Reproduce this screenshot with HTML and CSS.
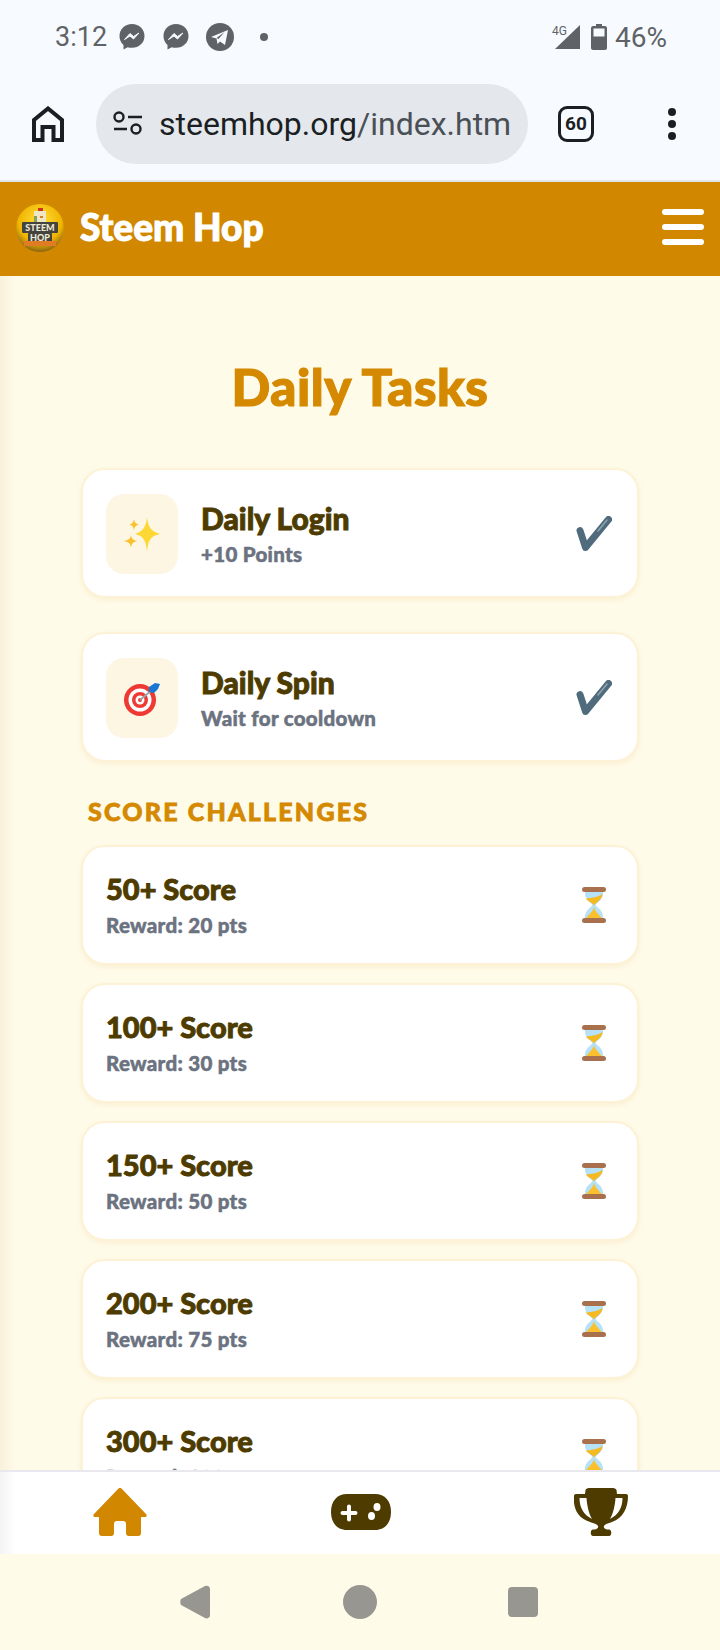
FILE: index.html
```html
<!DOCTYPE html>
<html lang="en">
<head>
    <meta charset="UTF-8">
    <meta name="viewport" content="width=device-width, initial-scale=1.0">
    <title>Steem Hop - Daily Tasks</title>
    <link rel="stylesheet" href="styles.css">
</head>
<body>
    <svg class="defs" width="0" height="0">
        <symbol id="hourglass" viewBox="0 0 24 36">
            <path d="M3 4C2 13 9 15 10.500 18 9 21 2 23 3 32H21C22 23 15 21 13.500 18 15 15 22 13 21 4z" fill="#b5e2f8"/>
            <path d="M4 11.500C10 11 16 10 20.500 7 20.500 13 14 15 12 18.500 10 15 5 14.500 4 11.500z" fill="#f5b921"/>
            <path d="M12 20C13 25 18 28 20 31.500H4C6 28 11 25 12 20z" fill="#fbc02d"/>
            <rect x="0" y="0" width="24" height="5" rx="2.500" fill="#a9704e"/>
            <rect x="0" y="31" width="24" height="5" rx="2.500" fill="#a9704e"/>
        </symbol>
        <symbol id="check" viewBox="0 0 36 36">
            <path d="M4 14.500L9.500 31.500 32.500 3.500" fill="none" stroke="#4f6b7c" stroke-width="7" stroke-linecap="round" stroke-linejoin="round"/>
            <path d="M22 15l9-11" stroke="#8fa4b1" stroke-width="1.500" stroke-linecap="round"/>
        </symbol>
        <symbol id="messenger" viewBox="0 0 26 26">
            <path d="M13 0C5.800 0 .5 5.200.5 12c0 3.700 1.500 6.800 4 9v4.500l4.200-2.300c1.300.4 2.800.6 4.300.6 7.200 0 12.500-5.200 12.500-11.800S20.200 0 13 0z" fill="#5f6368"/>
            <path d="M5.500 15.500l5.500-6 3.500 3 5.500-3.500-5.500 6-3.500-3z" fill="#f7faff" stroke="#f7faff" stroke-width="1" stroke-linejoin="round"/>
        </symbol>
    </svg>

    <div class="phone">
        <!-- Android status bar -->
        <div class="status-bar">
            <span class="status-time">3:12</span>
            <svg class="status-icon" width="26" height="26"><use href="#messenger"/></svg>
            <svg class="status-icon second" width="26" height="26"><use href="#messenger"/></svg>
            <svg class="status-icon third" width="28" height="28" viewBox="0 0 28 28">
                <circle cx="14" cy="14" r="14" fill="#5f6368"/>
                <path d="M5 14L22 7l-3 15-5-3.500-2.500 2.500-1-5.500zM10.500 15l8-6-6 7z" fill="#f7faff" fill-rule="evenodd"/>
            </svg>
            <span class="status-dot"></span>
            <span class="status-right">
                <svg width="30" height="26" viewBox="0 0 30 26" class="signal">
                    <path d="M28 1v24H3z" fill="#5f6368"/>
                    <text x="0" y="11" class="signal-text">4G</text>
                </svg>
                <svg width="16" height="26" viewBox="0 0 16 26" class="battery">
                    <path d="M5 0h6v2h3c1 0 2 1 2 2v20c0 1-1 2-2 2H2c-1 0-2-1-2-2V4c0-1 1-2 2-2h3z" fill="#5f6368"/>
                    <rect x="2.500" y="4.500" width="11" height="8" fill="#f7faff"/>
                </svg>
                <span class="status-pct">46%</span>
            </span>
        </div>

        <!-- Browser toolbar -->
        <div class="toolbar">
            <svg class="tool-home" width="32" height="36" viewBox="0 0 32 36">
                <path d="M2 34V14L16 2.500 30 14v20h-8.500V21h-11v13z" fill="none" stroke="#1b1f23" stroke-width="4"/>
            </svg>
            <div class="url-pill">
                <svg width="30" height="26" viewBox="0 0 30 26">
                    <circle cx="6" cy="6" r="4.500" fill="none" stroke="#1b1f23" stroke-width="2.400"/>
                    <path d="M15 6h14M1 18h13" stroke="#1b1f23" stroke-width="2.400"/>
                    <circle cx="23" cy="18" r="4.500" fill="none" stroke="#1b1f23" stroke-width="2.400"/>
                </svg>
                <span class="url-text"><b>steemhop.org</b>/index.htm</span>
            </div>
            <div class="tab-count">60</div>
            <div class="tool-menu"><i></i><i></i><i></i></div>
        </div>

        <!-- App header -->
        <header class="app-header">
            <div class="brand">
                <svg class="brand-logo" width="48" height="48" viewBox="0 0 48 48">
                    <defs>
                        <radialGradient id="coin" cx="50%" cy="35%" r="65%">
                            <stop offset="0" stop-color="#ffe23a"/>
                            <stop offset=".7" stop-color="#f0b400"/>
                            <stop offset="1" stop-color="#8a6414"/>
                        </radialGradient>
                    </defs>
                    <circle cx="24" cy="24" r="24" fill="url(#coin)"/>
                    <rect x="18" y="7" width="12" height="12" fill="#efe6c4"/>
                    <rect x="18" y="12" width="3" height="7" fill="#8aa05a"/>
                    <rect x="22" y="4" width="5" height="3" fill="#c8321e"/>
                    <rect x="24" y="12" width="3" height="2" fill="#e07c24"/>
                    <rect x="6" y="18" width="36" height="11" rx="1" fill="#44443f"/>
                    <rect x="12" y="29" width="24" height="9" rx="1" fill="#44443f"/>
                    <rect x="8" y="37" width="32" height="5" fill="#e07c24"/>
                    <text x="24" y="27" class="logo-text">STEEM</text>
                    <text x="24" y="36.500" class="logo-text">HOP</text>
                </svg>
                <span class="brand-name">Steem Hop</span>
            </div>
            <div class="burger"><i></i><i></i><i></i></div>
        </header>

        <main class="content">
            <h1 class="page-title">Daily Tasks</h1>

            <div class="task-card daily">
                <div class="task-icon">
                    <svg width="36" height="36" viewBox="0 0 36 36">
                        <path d="M23 1c1 9 3 14 13 17-10 2-12 7-13 18-1-11-3-16-12-18 9-3 11-8 12-17z" fill="#fdd835"/>
                        <path d="M10 3c.5 3 1.500 5 5 5.500-3.500 1-4.500 2.500-5 6-.5-3.500-1.500-5-4.500-6 3-.5 4-2.500 4.500-5.500z" fill="#fbc02d"/>
                        <path d="M7 19c.5 3.500 2 5 6 6-4 1-5.500 2.500-6 7-.5-4.500-2-6-7-7 5-1 6.500-2.500 7-6z" fill="#fbc02d"/>
                    </svg>
                </div>
                <div class="task-info">
                    <div class="task-name">Daily Login</div>
                    <div class="task-sub">+10 Points</div>
                </div>
                <svg class="task-state" width="36" height="36"><use href="#check"/></svg>
            </div>

            <div class="task-card daily">
                <div class="task-icon">
                    <svg width="36" height="36" viewBox="0 0 36 36">
                        <circle cx="16" cy="20" r="16" fill="#ef3a33"/>
                        <circle cx="16" cy="20" r="11.500" fill="#fff"/>
                        <circle cx="16" cy="20" r="8" fill="#ef3a33"/>
                        <circle cx="16" cy="20" r="4.500" fill="#fff"/>
                        <circle cx="16" cy="20" r="2" fill="#ef3a33"/>
                        <path d="M16 20L28 10" stroke="#9aa6ad" stroke-width="1.800"/>
                        <path d="M25 7l6-4 5 1-2 5-4 4-5-1z" fill="#1976d2"/>
                    </svg>
                </div>
                <div class="task-info">
                    <div class="task-name">Daily Spin</div>
                    <div class="task-sub">Wait for cooldown</div>
                </div>
                <svg class="task-state" width="36" height="36"><use href="#check"/></svg>
            </div>

            <h2 class="section-label">SCORE CHALLENGES</h2>

            <div class="task-card challenge">
                <div class="task-info">
                    <div class="task-name">50+ Score</div>
                    <div class="task-sub">Reward: 20 pts</div>
                </div>
                <svg class="task-state glass" width="24" height="36"><use href="#hourglass"/></svg>
            </div>
            <div class="task-card challenge">
                <div class="task-info">
                    <div class="task-name">100+ Score</div>
                    <div class="task-sub">Reward: 30 pts</div>
                </div>
                <svg class="task-state glass" width="24" height="36"><use href="#hourglass"/></svg>
            </div>
            <div class="task-card challenge">
                <div class="task-info">
                    <div class="task-name">150+ Score</div>
                    <div class="task-sub">Reward: 50 pts</div>
                </div>
                <svg class="task-state glass" width="24" height="36"><use href="#hourglass"/></svg>
            </div>
            <div class="task-card challenge">
                <div class="task-info">
                    <div class="task-name">200+ Score</div>
                    <div class="task-sub">Reward: 75 pts</div>
                </div>
                <svg class="task-state glass" width="24" height="36"><use href="#hourglass"/></svg>
            </div>
            <div class="task-card challenge">
                <div class="task-info">
                    <div class="task-name">300+ Score</div>
                    <div class="task-sub">Reward: 100 pts</div>
                </div>
                <svg class="task-state glass" width="24" height="36"><use href="#hourglass"/></svg>
            </div>
        </main>

        <!-- Bottom nav -->
        <nav class="bottom-nav">
            <svg width="56" height="48" viewBox="0 0 56 48">
                <path d="M28 0c1 0 1.500.5 2 1L54 26c1.500 2 .5 3-1.500 3H49V45c0 2-1 3-3 3H37c-2 0-3-1-3-3V36c0-2-1-3-3-3H25c-2 0-3 1-3 3V45c0 2-1 3-3 3H10c-2 0-3-1-3-3V29H3.500c-2 0-3-1-1.500-3L26 1c.5-.5 1-1 2-1z" fill="#d18800"/>
            </svg>
            <svg width="60" height="36" viewBox="0 0 60 36">
                <path d="M16 0h28c10 0 16 7 16 18s-6 18-16 18H16C6 36 0 29 0 18S6 0 16 0z" fill="#4d3b00"/>
                <path d="M18 12.500v13M11.500 19h13" stroke="#fff" stroke-width="4" stroke-linecap="round"/>
                <ellipse cx="46" cy="13" rx="3.500" ry="4" fill="#fff"/>
                <ellipse cx="40.500" cy="22" rx="3.500" ry="4" fill="#fff"/>
            </svg>
            <svg width="54" height="48" viewBox="0 0 54 48">
                <path d="M15 0H39c2 0 3 1 3.500 2L43 6h9c1.500 0 2 1 2 2 0 12-5 22-16 26-4 1.500-7 2-8 4-.5 1 0 3 3 3.500h2c3 0 3 6.500 0 6.500H19c-3 0-3-6.500 0-6.500h2c3-.5 3.500-2.500 3-3.500-1-2-4-2.500-8-4C3 30-1 20 0 8c0-1 .5-2 2-2h9l.5-4C12 1 13 0 15 0z M5.500 10H12.500C13 18 15 26 18 31 10 27 5.500 20 5.500 10z M48.500 10H41.500C41 18 39 26 36 31 44 27 48.500 20 48.500 10z" fill="#4d3b00" fill-rule="evenodd"/>
            </svg>
        </nav>

        <!-- Android nav buttons -->
        <div class="system-nav">
            <svg width="30" height="34" viewBox="0 0 30 34">
                <path d="M1 14L25 1c2-1 5 0 5 3v26c0 3-3 4-5 3L1 20c-1-2-1-4 0-6z" fill="#979690"/>
            </svg>
            <span class="sys-circle"></span>
            <span class="sys-square"></span>
        </div>
    </div>
</body>
</html>
```

FILE: styles.css
```css
body {
    margin: 0;
    padding: 0;
    background-color: #fffbe9;
    font-family: Lato, "Liberation Sans", sans-serif;
}

.defs {
    position: absolute;
}

.phone {
    display: flex;
    flex-direction: column;
    width: 720px;
    height: 1650px;
    overflow: hidden;
}

/* status bar */
.status-bar {
    display: flex;
    align-items: center;
    height: 74px;
    padding: 0 53px 0 55px;
    background-color: #f7faff;
    color: #5f6368;
    font-family: Roboto, sans-serif;
    flex-shrink: 0;
}

.status-time {
    font-size: 27px;
    margin-right: 12px;
}

.status-icon.second {
    margin-left: 18px;
}

.status-icon.third {
    margin-left: 17px;
}

.status-dot {
    width: 8px;
    height: 8px;
    margin-left: 26px;
    border-radius: 50%;
    background-color: #5f6368;
}

.status-right {
    display: flex;
    align-items: center;
    margin-left: auto;
}

.signal-text {
    font-family: Roboto, sans-serif;
    font-size: 12px;
    fill: #5f6368;
    stroke: #f7faff;
    stroke-width: 2px;
    paint-order: stroke;
}

.battery {
    margin-left: 9px;
    margin-right: 8px;
}

.status-pct {
    font-size: 28px;
}

/* browser toolbar */
.toolbar {
    display: flex;
    align-items: center;
    height: 108px;
    padding: 10px 0 16px;
    box-sizing: border-box;
    background-color: #f7faff;
    border-bottom: 2px solid #e1e5ea;
    flex-shrink: 0;
}

.tool-home {
    margin-left: 32px;
}

.url-pill {
    display: flex;
    align-items: center;
    gap: 16px;
    width: 432px;
    height: 80px;
    margin-left: 32px;
    padding-left: 17px;
    box-sizing: border-box;
    border-radius: 40px;
    background-color: #e4e8ec;
}

.url-text {
    font-family: Roboto, sans-serif;
    font-size: 32px;
    color: #4a5056;
    white-space: nowrap;
}

.url-text b {
    font-weight: 400;
    color: #1b1f23;
}

.tab-count {
    width: 36px;
    height: 36px;
    margin-left: 30px;
    box-sizing: border-box;
    border: 3.5px solid #1b1f23;
    border-radius: 9px;
    color: #1b1f23;
    font-family: Roboto, sans-serif;
    font-size: 19px;
    font-weight: 700;
    line-height: 29px;
    text-align: center;
}

.tool-menu {
    display: flex;
    flex-direction: column;
    gap: 4px;
    margin-left: 74px;
}

.tool-menu i {
    display: block;
    width: 8px;
    height: 8px;
    border-radius: 50%;
    background-color: #1b1f23;
}

/* app header */
.app-header {
    display: flex;
    align-items: center;
    justify-content: space-between;
    height: 94px;
    padding: 0 16px 2px;
    box-sizing: border-box;
    background-color: #d18800;
    flex-shrink: 0;
}

.brand {
    display: flex;
    align-items: center;
    gap: 16px;
}

.logo-text {
    font-family: Lato, sans-serif;
    font-size: 9px;
    font-weight: 900;
    fill: #eee9d6;
    text-anchor: middle;
}

.brand-name {
    padding-bottom: 4px;
    color: #fff;
    font-size: 37px;
    font-weight: 900;
    -webkit-text-stroke: 1px #fff;
}

.burger {
    display: flex;
    flex-direction: column;
    gap: 9px;
    margin-bottom: 2px;
}

.burger i {
    display: block;
    width: 42px;
    height: 6px;
    border-radius: 3px;
    background-color: #fff;
}

/* tasks */
.content {
    flex: 1;
    min-height: 0;
    overflow: hidden;
    padding: 0 81px;
    background: linear-gradient(to right, #f8f1da, #fffbe9 16px);
}

.page-title {
    margin: 81px 0 51px;
    color: #d48900;
    font-size: 51px;
    font-weight: 900;
    line-height: 60px;
    letter-spacing: 0.5px;
    text-align: center;
    -webkit-text-stroke: 1.2px #d48900;
}

.task-card {
    display: flex;
    align-items: center;
    box-sizing: border-box;
    border: 2px solid #fdf2d5;
    border-radius: 24px;
    background-color: #fff;
    box-shadow: 0 2px 5px rgba(209, 136, 0, 0.1);
}

.task-card.daily {
    height: 130px;
    margin-bottom: 34px;
    padding: 2px 25px 0 23px;
}

.task-card.challenge {
    height: 120px;
    margin-bottom: 18px;
    padding: 0 25px 0 23px;
}

.task-icon {
    display: flex;
    align-items: center;
    justify-content: center;
    width: 72px;
    height: 80px;
    margin-right: 23px;
    border-radius: 18px;
    background-color: #fdf6e3;
}

.task-info {
    flex: 1;
}

.task-name {
    color: #4d3b00;
    font-size: 29px;
    font-weight: 900;
    line-height: 36px;
    -webkit-text-stroke: 0.9px #4d3b00;
}

.daily .task-name {
    font-size: 30px;
}

.task-sub {
    margin-top: 4px;
    color: #6b7280;
    font-size: 20.5px;
    font-weight: 900;
    line-height: 28px;
    letter-spacing: 0.3px;
    -webkit-text-stroke: 0.5px #6b7280;
}

.task-state.glass {
    margin-right: 6px;
}

.section-label {
    margin: 0 0 19px 7px;
    color: #d48900;
    font-size: 25px;
    font-weight: 900;
    line-height: 30px;
    letter-spacing: 2.200px;
    -webkit-text-stroke: 0.8px #d48900;
}

/* bottom nav */
.bottom-nav {
    display: flex;
    align-items: center;
    justify-content: space-between;
    height: 80px;
    padding: 0 92px 2px;
    background: linear-gradient(to right, #f4f4f4, #fff 16px);
    border-top: 2px solid #e8e8ee;
    flex-shrink: 0;
}

/* system nav */
.system-nav {
    display: flex;
    align-items: center;
    height: 96px;
    padding: 0 0 0 180px;
    background-color: #fffbe9;
    flex-shrink: 0;
}

.sys-circle {
    width: 34px;
    height: 34px;
    margin-left: 133px;
    border-radius: 50%;
    background-color: #979690;
}

.sys-square {
    width: 30px;
    height: 30px;
    margin-left: 131px;
    border-radius: 4px;
    background-color: #979690;
}
```
